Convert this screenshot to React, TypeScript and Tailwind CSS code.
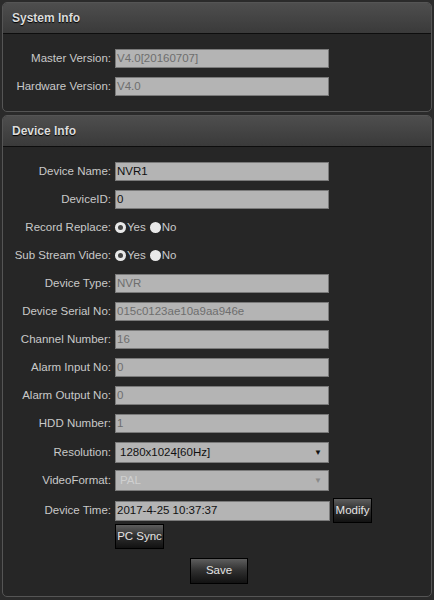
const font = { fontFamily: '"Liberation Sans", Arial, sans-serif' };

function Panel({ title, children }: { title: string; children: React.ReactNode }) {
	return (
		<div className="mx-[2px] overflow-hidden rounded-[5px] border border-[#555] bg-[#262626]">
			<div className="flex h-[31px] items-center border-b border-[#0d0d0d] bg-gradient-to-b from-[#4e4e4e] to-[#3a3a3a] px-[9px] text-[12px] font-bold text-[#dcdcdc] [text-shadow:0_1px_1px_#000]">
				{title}
			</div>
			{children}
		</div>
	);
}

function Row({ label, children }: { label: string; children: React.ReactNode }) {
	return (
		<div className="flex h-[19px] items-center">
			<div className="w-[109px] shrink-0 pr-[1px] text-right text-[11.5px] whitespace-nowrap text-[#c9c9c9]">
				{label}
			</div>
			<div className="ml-[3px] flex items-center">{children}</div>
		</div>
	);
}

function Field({ value, dark }: { value: string; dark?: boolean }) {
	return (
		<div
			className={
				'flex h-[19px] w-[214px] items-center border border-[#7a7a7a] bg-[#b4b4b4] px-[1px] text-[11.5px] ' +
				(dark ? 'text-[#111]' : 'text-[#6e6e6e]')
			}
		>
			{value}
		</div>
	);
}

function Select({ value, disabled }: { value: string; disabled?: boolean }) {
	return (
		<div className="flex h-[21px] w-[214px] items-center justify-between border border-[#7a7a7a] bg-[#b4b4b4] pr-[6px] pl-[4px] text-[11.5px]">
			<span className={disabled ? 'text-[#d0d0d0]' : 'text-[#111]'}>{value}</span>
			<span className={'text-[8px] ' + (disabled ? 'text-[#8a8a8a]' : 'text-[#111]')}>▼</span>
		</div>
	);
}

function Radio({ on, text }: { on?: boolean; text: string }) {
	return (
		<span className="flex items-center">
			<span className="flex h-[11px] w-[11px] items-center justify-center rounded-full bg-[#e8e8e8]">
				{on && <span className="h-[5px] w-[5px] rounded-full bg-[#444]" />}
			</span>
			<span className="ml-[1px] text-[11.5px] text-[#c9c9c9]">{text}</span>
		</span>
	);
}

function Btn({ text, className }: { text: string; className: string }) {
	return (
		<button
			className={
				'flex items-center justify-center border border-[#000] bg-gradient-to-b from-[#5e5e5e] via-[#2e2e2e] to-[#121212] text-[11.5px] text-[#e4e4e4] ' +
				className
			}
		>
			{text}
		</button>
	);
}

function Label({ text }: { text: string }) {
	return <div className="w-[109px] shrink-0 pr-[1px] text-right text-[11.5px] text-[#c9c9c9]">{text}</div>;
}

export default function App() {
	return (
		<div className="min-h-[600px] w-[434px] bg-[#2b2b2b] pt-[2px]" style={font}>
			<Panel title="System Info">
				<div className="flex flex-col gap-[9px] pt-[15px] pb-[15px]">
					<Row label="Master Version:">
						<Field value="V4.0[20160707]" />
					</Row>
					<Row label="Hardware Version:">
						<Field value="V4.0" />
					</Row>
				</div>
			</Panel>

			<div className="h-[3px]" />

			<Panel title="Device Info">
				<div className="flex flex-col gap-[9px] pt-[15px]">
					<Row label="Device Name:">
						<Field value="NVR1" dark />
					</Row>
					<Row label="DeviceID:">
						<Field value="0" dark />
					</Row>
					<Row label="Record Replace:">
						<div className="flex items-center gap-[4px]">
							<Radio on text="Yes" />
							<Radio text="No" />
						</div>
					</Row>
					<Row label="Sub Stream Video:">
						<div className="flex items-center gap-[4px]">
							<Radio on text="Yes" />
							<Radio text="No" />
						</div>
					</Row>
					<Row label="Device Type:">
						<Field value="NVR" />
					</Row>
					<Row label="Device Serial No:">
						<Field value="015c0123ae10a9aa946e" />
					</Row>
					<Row label="Channel Number:">
						<Field value="16" />
					</Row>
					<Row label="Alarm Input No:">
						<Field value="0" />
					</Row>
					<Row label="Alarm Output No:">
						<Field value="0" />
					</Row>
					<Row label="HDD Number:">
						<Field value="1" />
					</Row>
				</div>
				<div className="mt-[9px] flex flex-col gap-[7px]">
					<div className="flex h-[21px] items-center">
						<Label text="Resolution:" />
						<div className="ml-[3px]">
							<Select value="1280x1024[60Hz]" />
						</div>
					</div>
					<div className="flex h-[21px] items-center">
						<Label text="VideoFormat:" />
						<div className="ml-[3px]">
							<Select value="PAL" disabled />
						</div>
					</div>
				</div>
				<div className="mt-[7px] flex items-center">
					<Label text="Device Time:" />
					<div className="ml-[3px] flex items-center">
						<div className="flex h-[20px] w-[215px] items-center border border-[#7a7a7a] bg-[#b4b4b4] px-[1px] text-[11.5px] text-[#111]">
							2017-4-25 10:37:37
						</div>
						<Btn text="Modify" className="ml-[3px] h-[25px] w-[39px]" />
					</div>
				</div>
				<div className="mt-[1px] ml-[112px]">
					<Btn text="PC Sync" className="h-[25px] w-[49px]" />
				</div>
				<div className="flex justify-center pt-[9px] pb-[12px]">
					<Btn text="Save" className="ml-[4px] h-[26px] w-[58px]" />
				</div>
			</Panel>
		</div>
	);
}
